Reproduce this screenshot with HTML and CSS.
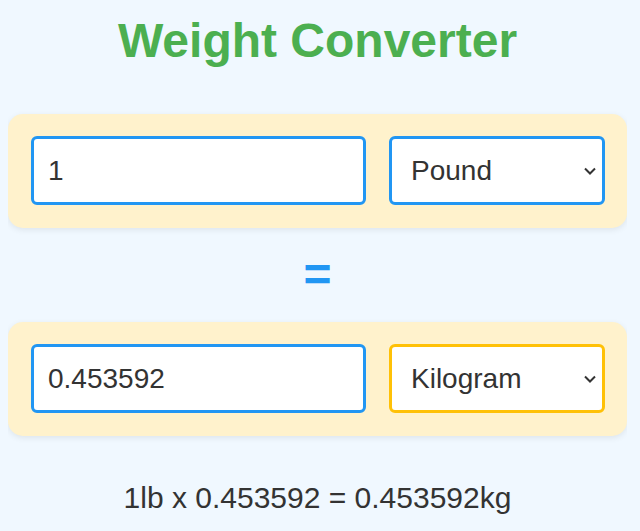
FILE: index.html
```html
<!DOCTYPE html>
<html lang="en">
<head>
    <meta charset="UTF-8">
    <meta name="viewport" content="width=device-width, initial-scale=1.0">
    <title>Weight Converter</title>
    <link rel="stylesheet" href="styles.css">
</head>
<body>
    <h1 class="title">Weight Converter</h1>

    <div class="converter-row">
        <input type="number" id="fromValue" class="value-input" value="1">
        <div class="select-wrap">
            <select id="fromUnit" class="unit-select">
                <option value="lb" selected>Pound</option>
                <option value="kg">Kilogram</option>
                <option value="g">Gram</option>
                <option value="oz">Ounce</option>
            </select>
            <svg class="chevron" width="12" height="8" viewBox="0 0 12 8"><path d="M1 1.5l5 5 5-5" fill="none" stroke="#333" stroke-width="2"/></svg>
        </div>
    </div>

    <div class="equals">=</div>

    <div class="converter-row">
        <input type="text" id="toValue" class="value-input" value="0.453592" readonly>
        <div class="select-wrap">
            <select id="toUnit" class="unit-select unit-select-to">
                <option value="lb">Pound</option>
                <option value="kg" selected>Kilogram</option>
                <option value="g">Gram</option>
                <option value="oz">Ounce</option>
            </select>
            <svg class="chevron" width="12" height="8" viewBox="0 0 12 8"><path d="M1 1.5l5 5 5-5" fill="none" stroke="#333" stroke-width="2"/></svg>
        </div>
    </div>

    <p class="formula" id="formula">1lb x 0.453592 = 0.453592kg</p>

    <script>
        // how many kilograms in one of each unit
        const toKg = { lb: 0.453592, kg: 1, g: 0.001, oz: 0.0283495 };

        function convert() {
            const value = parseFloat(document.getElementById('fromValue').value) || 0;
            const from = document.getElementById('fromUnit').value;
            const to = document.getElementById('toUnit').value;
            const factor = +(toKg[from] / toKg[to]).toFixed(6);
            const result = +(value * factor).toFixed(6);

            document.getElementById('toValue').value = result;
            document.getElementById('formula').textContent = `${value}${from} x ${factor} = ${result}${to}`;
        }

        document.getElementById('fromValue').addEventListener('input', convert);
        document.getElementById('fromUnit').addEventListener('change', convert);
        document.getElementById('toUnit').addEventListener('change', convert);
    </script>
</body>
</html>
```

FILE: styles.css
```css
body { margin: 8px 13px 8px 8px; font-family: "Liberation Sans", Arial, sans-serif; background-color: #f0f8ff; color: #333; }
.title { margin: 5px 0 46px; font-size: 48px; font-weight: bold; text-align: center; color: #4caf50; }
.converter-row { display: flex; gap: 23px; padding: 22px 22px 23px 23px; background-color: #fff2cc; border-radius: 15px; box-shadow: 0 2px 6px rgba(0, 0, 0, 0.08); }
.value-input, .unit-select { box-sizing: border-box; height: 69px; font-family: inherit; font-size: 28px; color: #333; background-color: #fff; border: 3px solid #2196f3; border-radius: 6px; outline: none; }
.value-input { width: 335px; padding: 0 14px; }
.select-wrap { position: relative; }
.unit-select { width: 216px; padding: 0 30px 0 19px; appearance: none; -webkit-appearance: none; }
.unit-select-to { border-color: #ffc107; }
.chevron { position: absolute; right: 9px; top: 31px; pointer-events: none; }
.equals { margin: 20px 0; line-height: 54px; font-size: 48px; font-weight: bold; text-align: center; color: #2196f3; }
.formula { margin: 45px 0 0; font-size: 30px; text-align: center; }
```
